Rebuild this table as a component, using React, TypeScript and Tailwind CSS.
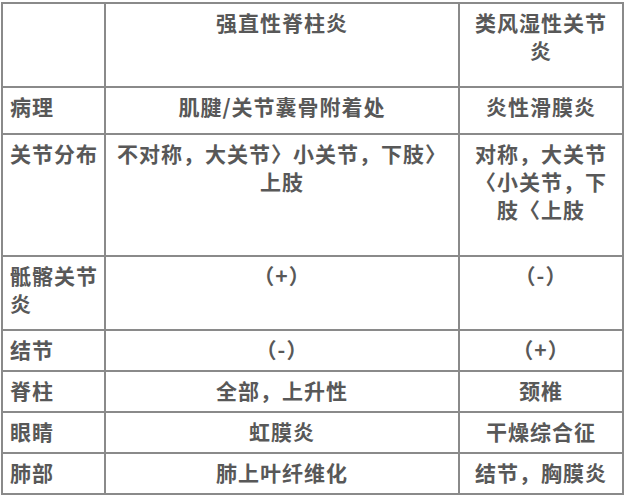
export default function App() {
  const rows: { h: string; label: string; a: string; b: string }[] = [
    { h: "h-[47px]", label: "病理", a: "肌腱/关节囊骨附着处", b: "炎性滑膜炎" },
    {
      h: "h-[122px]",
      label: "关节分布",
      a: "不对称，大关节〉小关节，下肢〉上肢",
      b: "对称，大关节〈小关节，下肢〈上肢",
    },
    { h: "h-[74px]", label: "骶髂关节炎", a: "（+）", b: "（-）" },
    { h: "h-[41px]", label: "结节", a: "（-）", b: "（+）" },
    { h: "h-[41px]", label: "脊柱", a: "全部，上升性", b: "颈椎" },
    { h: "h-[41px]", label: "眼睛", a: "虹膜炎", b: "干燥综合征" },
    { h: "h-[41px]", label: "肺部", a: "肺上叶纤维化", b: "结节，胸膜炎" },
  ];

  const cell = "border-2 border-[#8a8a8a] align-top pt-1";

  return (
    <div
      className="w-[624px] h-[497px] bg-white pl-px pt-[2px] text-[#585858] font-bold text-[21px] leading-[28px] tracking-[1px]"
      style={{ fontFamily: '"Noto Sans CJK SC", "Noto Sans", sans-serif' }}
    >
      <table className="table-fixed border-collapse w-[621px]">
        <colgroup>
          <col className="w-[103px]" />
          <col className="w-[354px]" />
          <col className="w-[164px]" />
        </colgroup>
        <tbody>
          <tr className="h-[84px]">
            <td className={cell}></td>
            <td className={`${cell} text-center px-2`}>强直性脊柱炎</td>
            <td className={`${cell} text-center px-2`}>类风湿性关节炎</td>
          </tr>
          {rows.map((r) => (
            <tr key={r.label} className={r.h}>
              <td className={`${cell} pl-[7px] pr-1 text-left`}>{r.label}</td>
              <td className={`${cell} text-center px-2`}>{r.a}</td>
              <td className={`${cell} text-center px-2`}>{r.b}</td>
            </tr>
          ))}
        </tbody>
      </table>
    </div>
  );
}
